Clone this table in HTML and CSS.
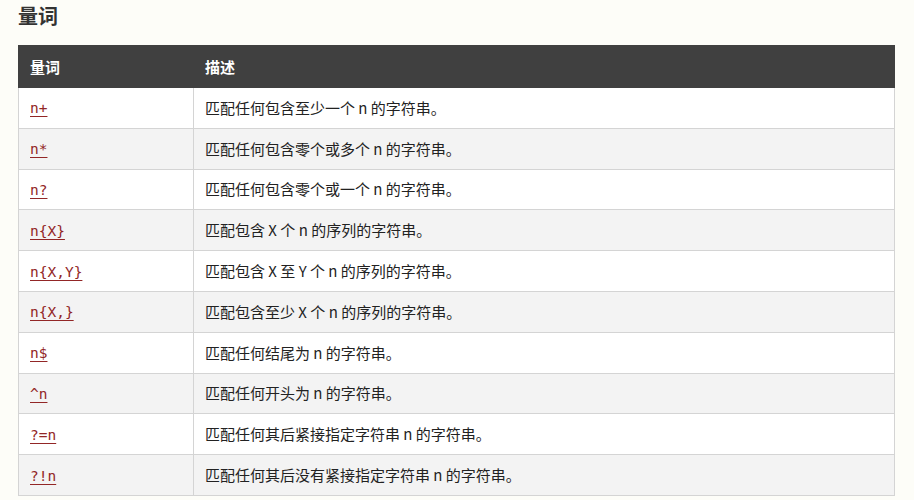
FILE: index.html
```html
<!DOCTYPE html>
<html lang="zh">
<head>
<meta charset="utf-8">
<title>量词</title>
<link rel="stylesheet" href="styles.css">
</head>
<body>
<h2 class="title">量词</h2>
<table class="ref">
  <thead>
    <tr><th class="c1">量词</th><th>描述</th></tr>
  </thead>
  <tbody>
    <tr><td class="c1"><a class="code">n+</a></td><td>匹配任何包含至少一个 n 的字符串。</td></tr>
    <tr><td class="c1"><a class="code">n*</a></td><td>匹配任何包含零个或多个 n 的字符串。</td></tr>
    <tr><td class="c1"><a class="code">n?</a></td><td>匹配任何包含零个或一个 n 的字符串。</td></tr>
    <tr><td class="c1"><a class="code">n{X}</a></td><td>匹配包含 X 个 n 的序列的字符串。</td></tr>
    <tr><td class="c1"><a class="code">n{X,Y}</a></td><td>匹配包含 X 至 Y 个 n 的序列的字符串。</td></tr>
    <tr><td class="c1"><a class="code">n{X,}</a></td><td>匹配包含至少 X 个 n 的序列的字符串。</td></tr>
    <tr><td class="c1"><a class="code">n$</a></td><td>匹配任何结尾为 n 的字符串。</td></tr>
    <tr><td class="c1"><a class="code">^n</a></td><td>匹配任何开头为 n 的字符串。</td></tr>
    <tr><td class="c1"><a class="code">?=n</a></td><td>匹配任何其后紧接指定字符串 n 的字符串。</td></tr>
    <tr><td class="c1"><a class="code">?!n</a></td><td>匹配任何其后没有紧接指定字符串 n 的字符串。</td></tr>
  </tbody>
</table>
</body>
</html>
```
FILE: styles.css
```css
html, body {
  margin: 0;
  padding: 0;
  background: #fdfdf8;
}
body {
  padding: 0 19px 0 18px;
  font-family: "Noto Sans CJK SC", "Noto Sans", sans-serif;
  color: #333;
  font-size: 15px;
}
.title {
  margin: 0;
  padding-top: 1px;
  height: 44px;
  font-size: 20px;
  line-height: 30px;
  font-weight: bold;
  color: #333;
}
.ref {
  width: 877px;
  border-collapse: collapse;
  border: 1px solid #d4d4d4;
  background: #fff;
}
.ref th {
  background: #404040;
  color: #fff;
  font-weight: bold;
  text-align: left;
  height: 41px;
  padding: 0 11px;
  font-size: 15px;
  border: 1px solid #404040;
}
.ref td {
  height: 39.8px;
  padding: 0 11px;
  border: 1px solid #d4d4d4;
  font-size: 15px;
  line-height: 20px;
  color: #222;
}
.ref .c1 {
  width: 152px;
}
.ref tbody tr:nth-child(even) td {
  background: #f3f3f3;
}
.code {
  font-family: "DejaVu Sans Mono", "Liberation Mono", monospace;
  font-size: 14.5px;
  color: #922626;
  text-decoration: underline;
  text-decoration-color: #922626;
  text-underline-offset: 3px;
}
```
